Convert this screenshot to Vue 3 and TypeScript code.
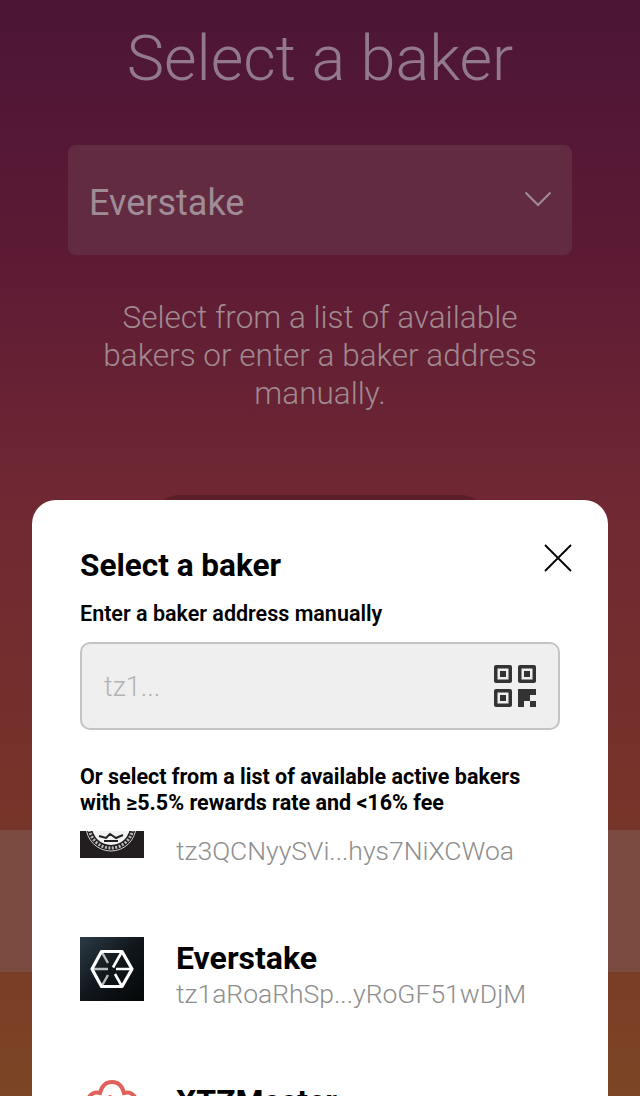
<script setup lang="ts">
// Delegate baker screen with the picker sheet open on top of it.
interface Baker {
  name: string;
  address: string;
  logo: 'seal' | 'everstake' | 'xtz';
}

// rows scroll under the list's top edge and past the bottom of the sheet,
// so only the parts that show are filled in
const bakers: Baker[] = [
  { name: '', address: 'tz3QCNyySVi...hys7NiXCWoa', logo: 'seal' },
  { name: 'Everstake', address: 'tz1aRoaRhSp...yRoGF51wDjM', logo: 'everstake' },
  { name: 'XTZMaster', address: '', logo: 'xtz' },
];
</script>

<template>
  <div class="page">
    <h1 class="page-title">Select a baker</h1>
    <div class="select">
      <span>Everstake</span>
      <svg class="chevron" width="28" height="16" viewBox="0 0 28 16">
        <path d="M1.500 1.500 L14 14 L26.500 1.500" fill="none" stroke="currentColor" stroke-width="2" />
      </svg>
    </div>
    <p class="page-hint">Select from a list of available bakers or enter a baker address manually.</p>
    <div class="page-button"></div>
    <div class="band"></div>

    <section class="sheet">
      <h2 class="sheet-title">Select a baker</h2>
      <svg class="close" width="28" height="28" viewBox="0 0 28 28">
        <path d="M1 1 L27 27 M27 1 L1 27" stroke="#000" stroke-width="1.800" fill="none" />
      </svg>
      <label class="label">Enter a baker address manually</label>
      <div class="input">
        <span class="placeholder">tz1...</span>
        <svg class="qr" width="42" height="42" viewBox="0 0 42 42" fill="#333">
          <path fill-rule="evenodd" d="M2 0h14a2 2 0 0 1 2 2v14a2 2 0 0 1-2 2H2a2 2 0 0 1-2-2V2a2 2 0 0 1 2-2zM3.500 3.500v11h11v-11zM6 6h6v6H6z" />
          <path fill-rule="evenodd" d="M26 0h14a2 2 0 0 1 2 2v14a2 2 0 0 1-2 2H26a2 2 0 0 1-2-2V2a2 2 0 0 1 2-2zM27.500 3.500v11h11v-11zM30 6h6v6h-6z" />
          <path fill-rule="evenodd" d="M2 24h14a2 2 0 0 1 2 2v14a2 2 0 0 1-2 2H2a2 2 0 0 1-2-2V26a2 2 0 0 1 2-2zM3.500 27.500v11h11v-11zM6 30h6v6H6z" />
          <path d="M24 24h18v6h-6v6h-6v6h-6z" />
          <path d="M36 36h6v6h-6z" />
        </svg>
      </div>
      <p class="list-title">Or select from a list of available active bakers with ≥5.5% rewards rate and &lt;16% fee</p>
      <div class="list">
        <div v-for="b in bakers" :key="b.logo" class="row">
          <div class="logo" :class="`logo-${b.logo}`">
            <svg v-if="b.logo === 'seal'" width="64" height="64" viewBox="0 0 64 64">
              <circle cx="31" cy="32" r="25" fill="none" stroke="#cfcfcf" stroke-width="1" />
              <circle cx="31" cy="32" r="22" fill="none" stroke="#bdbdbd" stroke-width="3" stroke-dasharray="2 1.500" />
              <circle cx="31" cy="32" r="19" fill="#f2f2f2" />
              <path d="M19 42 L26 44 L30 40 L36 44 L43 41 M24 47 L38 47" stroke="#222" stroke-width="2" fill="none" />
            </svg>
            <svg v-else-if="b.logo === 'everstake'" width="64" height="64" viewBox="0 0 64 64">
              <path d="M21.500 14.500 H42 L52 32 L42 49.500 H21.500 L12 32 Z" fill="none" stroke="#fff" stroke-width="3.200" stroke-linejoin="round" />
              <path d="M42 14.500 L33 30.500 M36 32 H52 M42 49.500 L35 37" stroke="#fff" stroke-width="2.600" />
              <path d="M21.500 14.500 L28 26 M12 32 H28 M21.500 49.500 L28 38" stroke="#fff" stroke-width="2.400" opacity="0.7" />
            </svg>
            <svg v-else width="64" height="64" viewBox="0 0 64 64">
              <path d="M9 26 C5 18 12 11 20 13 C22 5 27 2 32 2 C37 2 42 5 44 13 C52 11 59 18 55 26" fill="none" stroke="#e0605a" stroke-width="4" />
              <circle cx="30" cy="17" r="2" fill="#e0605a" />
            </svg>
          </div>
          <div class="info">
            <div class="name">{{ b.name }}</div>
            <div class="address">{{ b.address }}</div>
          </div>
        </div>
      </div>
    </section>
  </div>
</template>

<style scoped>
.page {
  position: relative;
  width: 640px;
  height: 1096px;
  overflow: hidden;
  display: flex;
  flex-direction: column;
  align-items: center;
  font-family: Roboto, "Liberation Sans", sans-serif;
  background: linear-gradient(180deg, #4c1536 0%, #5c1a34 23%, #702833 46%, #773329 73%, #7c4525 100%);
}
.page-title {
  margin: 23px 0 0;
  font-size: 63px;
  line-height: 72px;
  font-weight: 300;
  color: #93798c;
}
.select {
  margin-top: 50px;
  width: 504px;
  height: 110px;
  box-sizing: border-box;
  padding: 6px 20px 0 21px;
  display: flex;
  align-items: center;
  justify-content: space-between;
  border-radius: 8px;
  background: #622b42;
  color: #a08c96;
  font-size: 36px;
  font-weight: 400;
}
.chevron {
  color: #a08c96;
  margin-top: -8px;
}
.page-hint {
  margin: 44px 0 0;
  width: 450px;
  text-align: center;
  font-size: 31.500px;
  line-height: 38px;
  font-weight: 300;
  color: #a08a90;
}
.page-button {
  margin-top: 82px;
  width: 344px;
  height: 80px;
  flex: none;
  border-radius: 32px;
  background: #5c1f2a;
}
.band {
  margin-top: 255px;
  width: 100%;
  height: 142px;
  flex: none;
  background: #7a4a3e;
}
.sheet {
  position: absolute;
  left: 32px;
  right: 32px;
  top: 500px;
  bottom: 0;
  box-sizing: border-box;
  padding: 49px 48px 0;
  background: #fff;
  border-radius: 24px 24px 0 0;
  overflow: hidden;
  color: #000;
}
.sheet-title {
  margin: 0;
  font-size: 31.500px;
  line-height: 34px;
  font-weight: 700;
}
.close {
  position: absolute;
  top: 44px;
  right: 36px;
}
.label {
  display: block;
  margin-top: 19px;
  font-size: 21.500px;
  line-height: 24px;
  font-weight: 600;
}
.input {
  margin-top: 16px;
  height: 88px;
  box-sizing: border-box;
  padding: 0 22px;
  display: flex;
  align-items: center;
  justify-content: space-between;
  border: 2px solid #c4c4c4;
  border-radius: 10px;
  background: #efefef;
}
.placeholder {
  padding-top: 2px;
  font-size: 27px;
  font-weight: 300;
  color: #b3b3b3;
}
.list-title {
  margin: 34px 0 0;
  font-size: 21.500px;
  line-height: 26px;
  font-weight: 700;
}
.list {
  height: 300px;
  margin-top: 15px;
  overflow: hidden;
  display: flex;
  flex-direction: column;
  gap: 79px;
}
.row {
  display: flex;
  align-items: center;
  gap: 32px;
  height: 64px;
  flex: none;
}
.row:first-child {
  margin-top: -37px;
}
.logo {
  width: 64px;
  height: 64px;
  flex: none;
  overflow: hidden;
}
.logo-seal {
  background: #221e1f;
}
.logo-everstake {
  background: linear-gradient(135deg, #2b3b45 0%, #10161b 50%, #050708 100%);
}
.logo-xtz {
  background: #fff;
}
.info {
  min-width: 0;
  margin-top: 14px;
}
.name {
  min-height: 36px;
  font-size: 32px;
  line-height: 36px;
  font-weight: 700;
}
.address {
  min-height: 36px;
  font-size: 26.500px;
  line-height: 36px;
  font-weight: 300;
  color: #8e8e8e;
  white-space: nowrap;
}
</style>
